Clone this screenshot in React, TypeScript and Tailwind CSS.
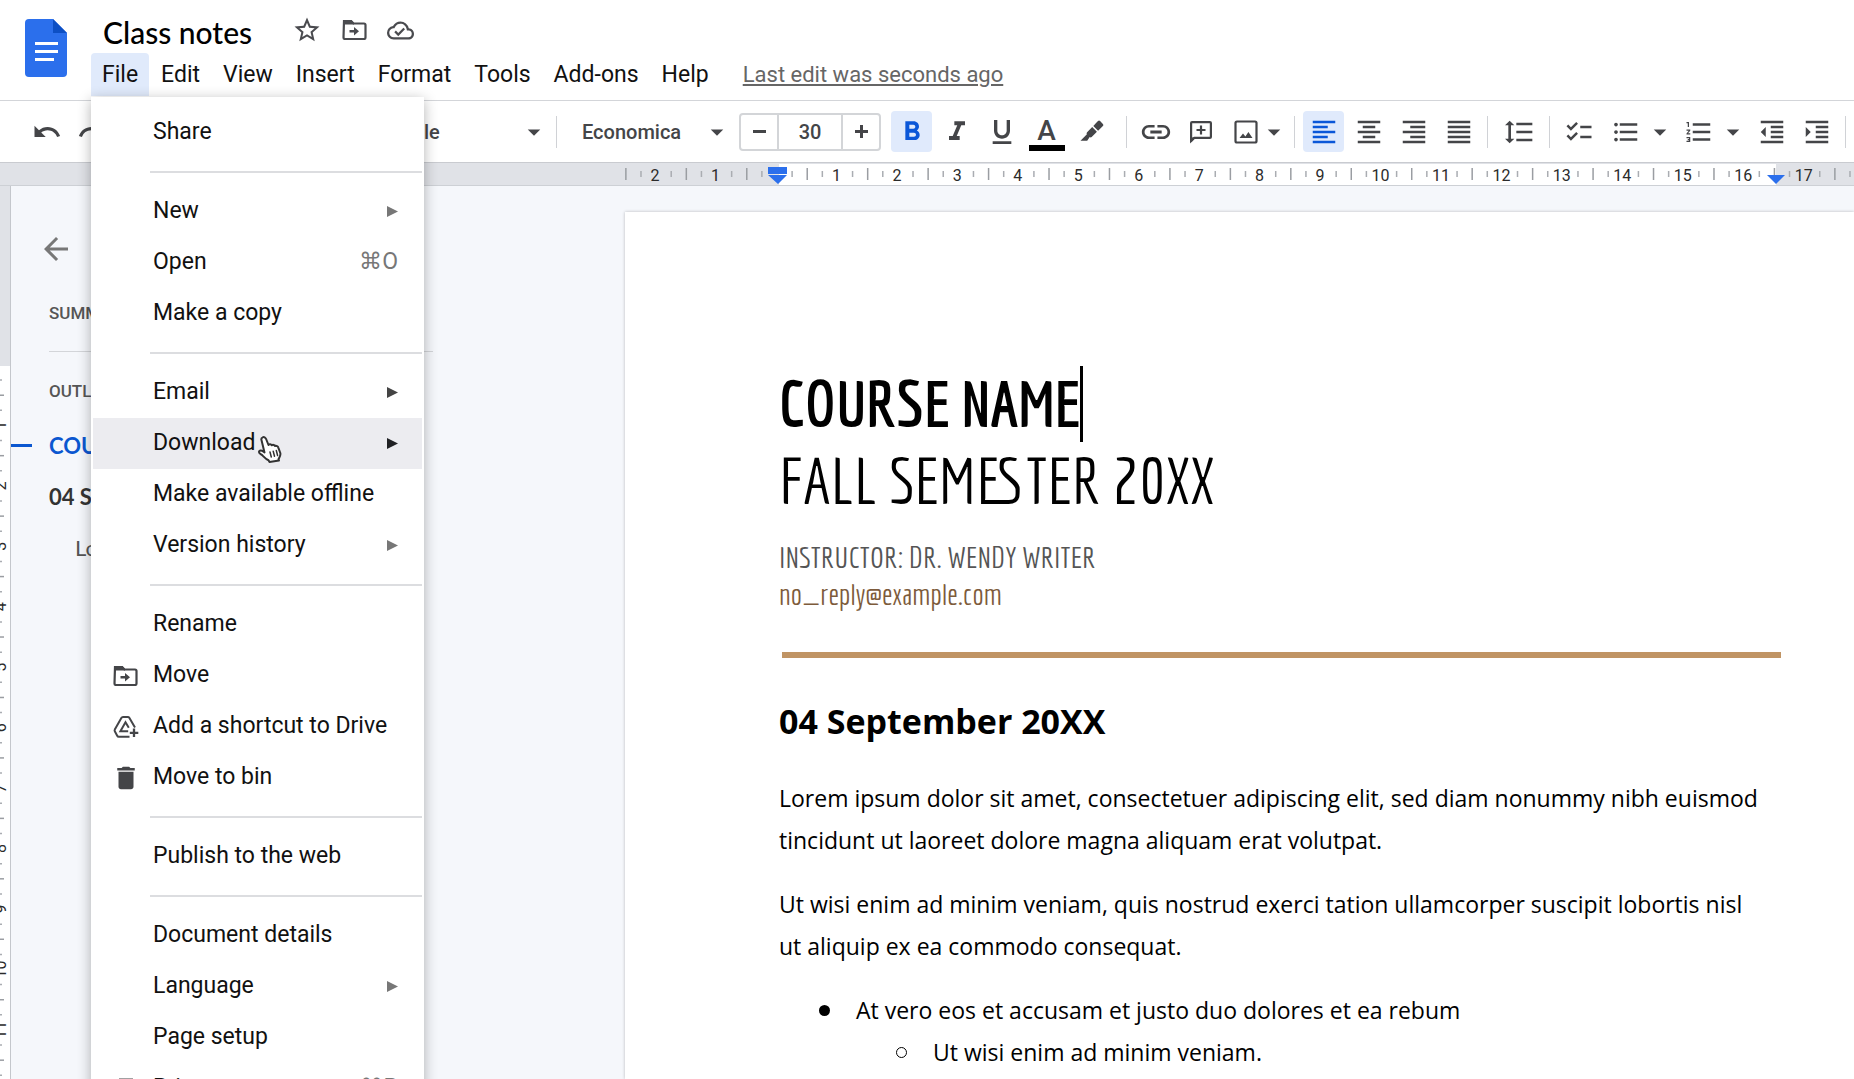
import type { ReactNode } from "react";
import {
  MdArrowBack,
  MdArrowDropDown,
  MdChecklist,
  MdDelete,
  MdFormatAlignCenter,
  MdFormatAlignJustify,
  MdFormatAlignLeft,
  MdFormatAlignRight,
  MdFormatBold,
  MdFormatIndentDecrease,
  MdFormatIndentIncrease,
  MdFormatItalic,
  MdFormatLineSpacing,
  MdFormatListBulleted,
  MdFormatListNumbered,
  MdFormatUnderlined,
  MdLink,
  MdOutlineCloudDone,
  MdPrint,
  MdRedo,
  MdStarBorder,
  MdUndo,
} from "react-icons/md";

const CM = 60.45;

const MENUS = ["File", "Edit", "View", "Insert", "Format", "Tools", "Add-ons", "Help"];

type Item = {
  label: string;
  icon?: ReactNode;
  shortcut?: string;
  arrow?: string;
  active?: boolean;
};

const FILE_MENU: Item[][] = [
  [{ label: "Share" }],
  [
    { label: "New", arrow: "text-[#777]" },
    { label: "Open", shortcut: "⌘O" },
    { label: "Make a copy" },
  ],
  [
    { label: "Email", arrow: "text-[#444]" },
    { label: "Download", arrow: "text-[#202124]", active: true },
    { label: "Make available offline" },
    { label: "Version history", arrow: "text-[#777]" },
  ],
  [
    { label: "Rename" },
    { label: "Move", icon: <MoveFolderIcon /> },
    { label: "Add a shortcut to Drive", icon: <AddToDriveIcon /> },
    { label: "Move to bin", icon: <MdDelete size={30} /> },
  ],
  [{ label: "Publish to the web" }],
  [
    { label: "Document details" },
    { label: "Language", arrow: "text-[#777]" },
    { label: "Page setup" },
    { label: "Print", icon: <MdPrint size={28} />, shortcut: "⌘P" },
  ],
];

function DocsLogo() {
  return (
    <svg viewBox="0 0 42 58" className="h-[58px] w-[42px] shrink-0" aria-hidden="true">
      <path d="M4 0h24l14 14v40a4 4 0 0 1-4 4H4a4 4 0 0 1-4-4V4a4 4 0 0 1 4-4z" fill="#2b6fec" />
      <path d="M28 0l14 14H28z" fill="#0d4fc4" />
      <path d="M10 23h23v3H10zM10 31h23v3H10zM10 39h19v3H10z" fill="#fff" />
    </svg>
  );
}

function MoveFolderIcon() {
  return (
    <svg viewBox="0 0 25 20" className="h-5 w-[25px]" aria-hidden="true">
      <path d="M2 1h7l2.500 2.500H22a1.500 1.500 0 0 1 1.500 1.500v12.500A1.500 1.500 0 0 1 22 19H3a1.500 1.500 0 0 1-1.500-1.500z" fill="none" stroke="currentColor" strokeWidth="2.200" />
      <path d="M2 0h7.500L12 3v1.500H1V1z" fill="currentColor" />
      <path d="M12 7l5 4.200-5 4.300v-3.100H7.500v-2.300H12z" fill="currentColor" />
    </svg>
  );
}

function AddToDriveIcon() {
  return (
    <svg viewBox="0 0 26 24" className="h-6 w-[26px]" fill="none" stroke="currentColor" strokeWidth="2" aria-hidden="true">
      <path d="M22 12.500L16.300 2.800a1.800 1.800 0 0 0-1.500-.9H10a1.800 1.800 0 0 0-1.500.9L1.800 14.600a1.800 1.800 0 0 0 0 1.700l2.400 4.500a1.800 1.800 0 0 0 1.600 1H16.500" />
      <path d="M15.800 12.800L12.500 7.200 7.400 16.300h7.800" />
      <path d="M21 13.500v8.500M16.800 17.800h8.500" strokeWidth="2.300" />
    </svg>
  );
}

function MarkerIcon() {
  return (
    <svg viewBox="0 0 24 24" className="h-6 w-6" fill="currentColor" aria-hidden="true">
      <path d="M16.300 2.800l1.700-1.700a1.500 1.500 0 0 1 2.100 0l2.800 2.800a1.500 1.500 0 0 1 0 2.100l-4.800 4.800-4.800-4.800z" />
      <path d="M12.200 7.100l4.700 4.700-5.200 5.200a1.500 1.500 0 0 1-2 .1l-2.500 3.700H0.500l6.400-6.600a1.500 1.500 0 0 1 .2-2z" />
    </svg>
  );
}

function AddCommentIcon() {
  return (
    <svg viewBox="0 0 24 24" className="h-6 w-6" fill="none" stroke="currentColor" strokeWidth="2.200" aria-hidden="true">
      <path d="M2.100 21V3.100a1 1 0 0 1 1-1h17.800a1 1 0 0 1 1 1v13.800a1 1 0 0 1-1 1H5z" strokeLinejoin="round" />
      <path d="M12 5.500v9M7.500 10h9" />
      <path d="M1 17v6.500l5.500-5.500z" fill="currentColor" stroke="none" />
    </svg>
  );
}

function ImageIcon() {
  return (
    <svg viewBox="0 0 24 24" className="h-6 w-6" fill="none" stroke="currentColor" strokeWidth="2.200" aria-hidden="true">
      <rect x="1.500" y="1.500" width="21" height="21" rx="1.500" />
      <path d="M5.500 18l3.500-4.500 2.400 3 3-4.500 4.100 6z" fill="currentColor" stroke="none" />
    </svg>
  );
}

function HandPointer() {
  return (
    <svg viewBox="0 0 26 28" className="absolute left-[257px] top-[435px] z-30 h-7 w-[26px]" aria-hidden="true">
      <path
        d="M5.500 2.500c1.500-1 3 0 3.600 1.500L11.500 10c.8-1 2.600-.9 3.300.3 1-.8 2.700-.5 3.300.7 1.200-.5 2.800.2 3.200 1.600l2 5.400c.7 2.500-.8 4.500-1.800 6.200l.5 1.300-9.500 1.500-1-1.700c-2.500-1-4.500-3.300-6.500-5.300-1.200-1.200-3.300-1.500-3-3.300.3-1.500 2.500-1.500 4.500 0l1 .7L4.600 5.500c-.5-1.300 0-2.500.9-3z"
        fill="#fff"
        stroke="#333"
        strokeWidth="2"
        strokeLinejoin="round"
      />
      <path d="M13 17l1.300 5M16.200 16.200l1.300 5M19.300 15.500l1.300 5" stroke="#333" strokeWidth="1.500" strokeLinecap="round" />
    </svg>
  );
}

function Separator() {
  return <span className="h-8 w-px shrink-0 bg-[#d0d2d6]" />;
}

function ToolButton({ label, active, children }: { label: string; active?: boolean; children: ReactNode }) {
  return (
    <button
      type="button"
      aria-label={label}
      aria-pressed={active}
      className={`flex h-[41px] w-[41px] shrink-0 items-center justify-center rounded ${
        active ? "bg-[#e0eafc] text-[#0b57d8]" : "text-[#444548]"
      }`}
    >
      {children}
    </button>
  );
}

function DropButton({ label }: { label: string }) {
  return (
    <button type="button" aria-label={label} className="flex w-6 shrink-0 justify-center text-[#444548]">
      <MdArrowDropDown size={30} className="shrink-0" />
    </button>
  );
}

function Header() {
  return (
    <header className="flex h-[101px] items-start border-b border-[#d3d5d9] pl-[25px] pt-[19px]">
      <DocsLogo />
      <div className="ml-6">
        <div className="-mt-2 flex h-[42px] items-center pl-3 text-[#4a4b4f]">
          <h1 className="mr-10 font-['Lato','Roboto',sans-serif] text-[30px] font-medium leading-10 text-black">Class notes</h1>
          <div className="flex items-center gap-5 pb-1">
            <button type="button" aria-label="Star"><MdStarBorder size={30} /></button>
            <button type="button" aria-label="Move"><MoveFolderIcon /></button>
            <button type="button" aria-label="Document status"><MdOutlineCloudDone size={27} /></button>
          </div>
        </div>
        <nav className="flex items-start gap-px text-[23px] text-[#111]">
          {MENUS.map((name) => (
            <button
              key={name}
              type="button"
              className={`h-[43px] rounded-t px-[11px] leading-[43px] ${name === "File" ? "bg-[#e0eafb]" : ""}`}
            >
              {name}
            </button>
          ))}
          <a href="#history" className="ml-[22px] text-[22px] leading-[43px] text-[#666] underline underline-offset-2">
            Last edit was seconds ago
          </a>
        </nav>
      </div>
    </header>
  );
}

function Toolbar() {
  return (
    <div className="flex h-[62px] items-center overflow-hidden border-b border-[#c9cbd0] pl-[26px] text-[#444548]">
      <div className="flex w-[362px] shrink-0 gap-1">
        <ToolButton label="Undo"><MdUndo size={30} /></ToolButton>
        <ToolButton label="Redo"><MdRedo size={30} /></ToolButton>
      </div>
      <button type="button" className="flex w-[168px] shrink-0 items-center justify-between pl-3 pr-[7px] text-xl font-medium">
        Title
        <MdArrowDropDown size={30} />
      </button>
      <Separator />
      <button type="button" className="ml-[25px] flex w-[150px] shrink-0 items-center justify-between text-xl font-medium">
        Economica
        <MdArrowDropDown size={30} />
      </button>
      <div className="ml-[7px] flex h-[38px] w-[142px] shrink-0 items-stretch rounded border-2 border-[#d3d5d8] text-xl font-medium">
        <button type="button" aria-label="Decrease font size" className="flex w-[36px] items-center justify-center">
          <span className="h-[3px] w-[13px] bg-[#444548]" />
        </button>
        <input
          aria-label="Font size"
          defaultValue="30"
          className="w-0 flex-1 border-x-2 border-[#d3d5d8] text-center outline-none"
        />
        <button type="button" aria-label="Increase font size" className="relative flex w-[36px] items-center justify-center">
          <span className="h-[3px] w-[13px] bg-[#444548]" />
          <span className="absolute h-[13px] w-[3px] bg-[#444548]" />
        </button>
      </div>
      <div className="ml-[10px] flex gap-1">
        <ToolButton label="Bold" active><MdFormatBold size={32} /></ToolButton>
        <ToolButton label="Italic"><MdFormatItalic size={32} /></ToolButton>
        <ToolButton label="Underline"><MdFormatUnderlined size={32} /></ToolButton>
        <ToolButton label="Text colour">
          <span className="flex flex-col items-center">
            <span className="mt-1 text-[28px] font-medium leading-7">A</span>
            <span className="h-[6px] w-9 bg-black" />
          </span>
        </ToolButton>
        <ToolButton label="Highlight colour"><MarkerIcon /></ToolButton>
      </div>
      <span className="w-[14px] shrink-0" />
      <Separator />
      <div className="ml-2 flex gap-1">
        <ToolButton label="Insert link"><MdLink size={34} /></ToolButton>
        <ToolButton label="Add comment"><AddCommentIcon /></ToolButton>
        <ToolButton label="Insert image"><ImageIcon /></ToolButton>
      </div>
      <span className="-ml-1 flex w-7 shrink-0"><DropButton label="Image options" /></span>
      <span className="w-1 shrink-0" />
      <Separator />
      <div className="ml-2 flex gap-1">
        <ToolButton label="Left align" active><MdFormatAlignLeft size={30} /></ToolButton>
        <ToolButton label="Centre align"><MdFormatAlignCenter size={30} /></ToolButton>
        <ToolButton label="Right align"><MdFormatAlignRight size={30} /></ToolButton>
        <ToolButton label="Justify"><MdFormatAlignJustify size={30} /></ToolButton>
      </div>
      <span className="w-2 shrink-0" />
      <Separator />
      <span className="mx-[10px]"><ToolButton label="Line spacing"><MdFormatLineSpacing size={32} /></ToolButton></span>
      <Separator />
      <div className="ml-2 flex items-center gap-[6px]">
        <ToolButton label="Checklist"><MdChecklist size={30} /></ToolButton>
        <ToolButton label="Bulleted list"><MdFormatListBulleted size={30} /></ToolButton>
      </div>
      <span className="w-[2px] shrink-0" />
      <DropButton label="Bullet styles" />
      <span className="ml-[6px] mr-[2px]"><ToolButton label="Numbered list"><MdFormatListNumbered size={30} /></ToolButton></span>
      <DropButton label="Number styles" />
      <div className="ml-[6px] flex gap-1">
        <ToolButton label="Decrease indent"><MdFormatIndentDecrease size={30} /></ToolButton>
        <ToolButton label="Increase indent"><MdFormatIndentIncrease size={30} /></ToolButton>
      </div>
      <span className="w-2 shrink-0" />
      <Separator />
    </div>
  );
}

function HorizontalRuler() {
  const zero = 777;
  const marks = Array.from({ length: 21 }, (_, i) => i - 2);

  return (
    <div className="h-[23px] overflow-hidden border-b border-[#cdd0d5] bg-[#e0e2e7]">
      <svg className="block h-[22px] w-full" aria-label="Horizontal ruler">
        <rect x={779} y="1" width={997} height="21" fill="#fff" />
        {marks.map((n) => {
          const x = zero + n * CM;
          return (
            <g key={n}>
              <path d={`M${x - CM / 2} 5v12`} stroke="#9a9da2" strokeWidth="1.500" />
              <path d={`M${x - CM / 4} 8v6M${x + CM / 4} 8v6`} stroke="#aaadb2" strokeWidth="1.500" />
              {n !== 0 && n < 18 && (
                <text x={x - 1} y="18" textAnchor="middle" fontSize="16" fill="#2b2b2b">
                  {Math.abs(n)}
                </text>
              )}
            </g>
          );
        })}
        <path d="M768 4h19v7h-19zM768 12h19l-9 9z" fill="#2b6fec" />
        <path d="M1767 12h18l-9 9z" fill="#2b6fec" />
      </svg>
    </div>
  );
}

function VerticalRuler() {
  const zero = 179;
  const marks = Array.from({ length: 13 }, (_, i) => i);

  return (
    <div className="w-[11px] shrink-0 overflow-hidden border-r border-[#c4c7cc] bg-white">
      <svg className="block h-full w-full" aria-label="Vertical ruler">
        <rect x="0" y="0" width="10" height={zero + 1} fill="#e0e2e7" />
        {marks.map((n) => {
          const y = zero + n * CM;
          return (
            <g key={n}>
              <path d={`M0 ${y + CM / 2}h4`} stroke="#9a9da2" strokeWidth="1.500" />
              <path d={`M0 ${y + CM / 4}h2M0 ${y + (CM * 3) / 4}h2`} stroke="#aaadb2" strokeWidth="1.500" />
              {n !== 0 && (
                <text x="6" y={y} transform={`rotate(-90 6 ${y})`} textAnchor="middle" fontSize="16" fill="#2b2b2b">
                  {n}
                </text>
              )}
            </g>
          );
        })}
      </svg>
    </div>
  );
}

function Outline() {
  return (
    <aside className="w-[614px] shrink-0 pt-[45px]">
      <button type="button" aria-label="Close outline" className="ml-[27px] block text-[#777]">
        <MdArrowBack size={36} />
      </button>
      <div className="ml-[38px] w-96 text-[17px] font-medium text-[#555]">
        <h2 className="mt-[34px] border-b border-[#d3d5d9] pb-[26px] leading-6">SUMMARY</h2>
        <h2 className="mt-[27px] leading-6">OUTLINE</h2>
      </div>
      <ul className="font-['Lato','Roboto',sans-serif] text-[22px] leading-[51px] text-[#333]">
        <li className="mt-[17px] flex items-center font-bold text-[#0b57d0]">
          <span className="mr-[17px] h-[3px] w-[21px] bg-[#0b57d0]" />
          COURSE NAME
        </li>
        <li className="pl-[38px] font-bold">04 September 20XX</li>
        <li className="pl-16 text-[#555]">Lorem ipsum</li>
      </ul>
    </aside>
  );
}

function FileMenu() {
  return (
    <div
      role="menu"
      className="absolute left-[91px] top-[97px] z-20 w-[333px] rounded-b bg-white px-[2px] pt-[10px] text-[23px] text-[#111] shadow-[0_3px_14px_rgba(0,0,0,0.3)]"
    >
      {FILE_MENU.map((group, i) => (
        <div key={i}>
          {i > 0 && <hr className="my-[13px] ml-[57px] border-t-2 border-[#dcdde0]" />}
          {group.map((item) => (
            <button
              key={item.label}
              type="button"
              role="menuitem"
              className={`flex h-[51px] w-full items-center pr-[24px] text-left ${item.active ? "bg-[#ececf0]" : ""}`}
            >
              <span className="flex w-[60px] shrink-0 justify-center pl-[5px] text-[#444548]">{item.icon}</span>
              <span className="flex-1 whitespace-nowrap">{item.label}</span>
              {item.shortcut && <span className="text-[#777]">{item.shortcut}</span>}
              {item.arrow && (
                <svg viewBox="0 0 11 11" className={`h-[11px] w-[11px] shrink-0 ${item.arrow}`} fill="currentColor" aria-hidden="true">
                  <path d="M0 0l11 5.500L0 11z" />
                </svg>
              )}
            </button>
          ))}
        </div>
      ))}
    </div>
  );
}

function DocumentPage() {
  return (
    <article className="mt-[26px] min-w-0 flex-1 bg-white pl-[154px] pr-[73px] pt-[153px] font-['Open_Sans',sans-serif] text-black shadow-[0_0_3px_rgba(0,0,0,0.25)]">
      <div className="font-['Economica','Liberation_Sans_Narrow',sans-serif]">
        <h1 className="flex items-center text-[64px] font-bold leading-[77px]">
          COURSE NAME
          <span className="h-[76px] w-[3px] bg-black" />
        </h1>
        <p className="text-[64px] leading-[77px]">FALL SEMESTER 20XX</p>
        <p className="mt-5 text-[30px] leading-[37px] text-[#555]">INSTRUCTOR: DR. WENDY WRITER</p>
        <p className="text-[30px] leading-[37px] text-[#7d5b3b]">no_reply@example.com</p>
      </div>
      <hr className="ml-[3px] mt-[39px] border-t-[6px] border-[#c09464]" />
      <h2 className="mt-[39px] text-[34px] font-bold leading-[48px]">04 September 20XX</h2>
      <div className="mt-8 space-y-[22px] pr-4 text-[23px] leading-[42px]">
        <p>
          Lorem ipsum dolor sit amet, consectetuer adipiscing elit, sed diam nonummy nibh euismod tincidunt ut laoreet
          dolore magna aliquam erat volutpat.
        </p>
        <p>
          Ut wisi enim ad minim veniam, quis nostrud exerci tation ullamcorper suscipit lobortis nisl ut aliquip ex ea
          commodo consequat.
        </p>
        <ul className="pl-10">
          <li className="flex items-center">
            <span className="mr-[26px] h-[11px] w-[11px] rounded-full bg-black" />
            At vero eos et accusam et justo duo dolores et ea rebum
          </li>
          <li className="flex items-center pl-[77px]">
            <span className="mr-[26px] h-[11px] w-[11px] rounded-full border border-black" />
            Ut wisi enim ad minim veniam.
          </li>
        </ul>
      </div>
    </article>
  );
}

export default function App() {
  return (
    <div className="relative flex h-screen flex-col overflow-hidden bg-white font-['Roboto',sans-serif]">
      <Header />
      <Toolbar />
      <HorizontalRuler />
      <main className="flex min-h-0 flex-1 overflow-hidden bg-[#f5f7fb]">
        <VerticalRuler />
        <Outline />
        <DocumentPage />
      </main>
      <FileMenu />
      <HandPointer />
    </div>
  );
}
